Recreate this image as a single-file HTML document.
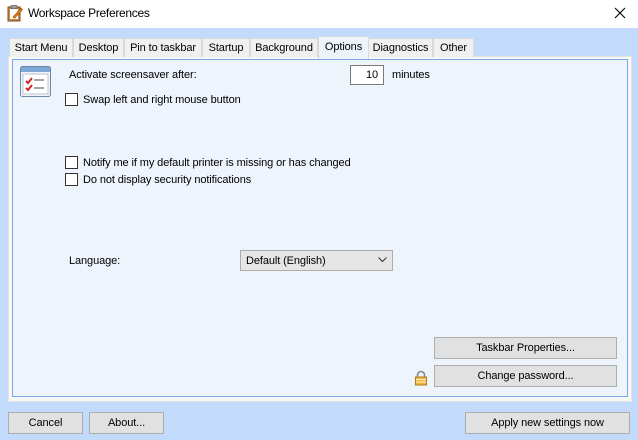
<!DOCTYPE html>
<html><head><style>
*{box-sizing:border-box;margin:0;padding:0}
body{width:638px;height:440px;background:#c2dbfc;font-family:"Liberation Sans",sans-serif;font-size:11px;letter-spacing:-0.1px;color:#000;position:relative;overflow:hidden}
.a{position:absolute}
.title{left:0;top:0;width:638px;height:28px;background:#fff}
.tab{position:absolute;top:38px;height:19px;background:#f0f0f0;border:1px solid #d9d9d9;border-bottom:none;text-align:center;line-height:18px;font-size:11px}
.btn{position:absolute;background:#e1e1e1;border:1px solid #adadad;text-align:center;font-size:11px}
.cb{position:absolute;width:13px;height:13px;border:1px solid #333;background:#fff}
</style></head><body>
<div class="a title"></div>
<svg class="a" style="left:6px;top:4px" width="18" height="18" viewBox="0 0 18 18">
<rect x="2" y="3" width="12" height="14" fill="#c98a4b" stroke="#7a4a1c"/>
<rect x="4" y="5" width="8" height="10" fill="#fff"/>
<rect x="5" y="1.5" width="6" height="3" fill="#999" stroke="#555" stroke-width=".6"/>
<path d="M7 13 L15 4 L16.5 5.5 L8.5 14.5 Z" fill="#e87a1a" stroke="#a34b00" stroke-width=".6"/>
</svg>
<div class="a" style="left:28px;top:6px;font-size:12px;letter-spacing:-0.3px">Workspace Preferences</div>
<svg class="a" style="left:614px;top:7px" width="12" height="12"><path d="M1 1L11 11M11 1L1 11" stroke="#000" stroke-width="1.1"/></svg>

<div class="a" style="left:8px;top:56px;width:624px;height:346px;background:#f8f8f8;border:1px solid #e2e2e2"></div>
<div class="a" style="left:12px;top:59px;width:616px;height:338px;background:#eef4fc;border:1px solid #7aa7e8"></div>

<div class="tab" style="left:9px;width:64px">Start Menu</div>
<div class="tab" style="left:73px;width:51px">Desktop</div>
<div class="tab" style="left:124px;width:78px">Pin to taskbar</div>
<div class="tab" style="left:202px;width:48px">Startup</div>
<div class="tab" style="left:250px;width:68px">Background</div>
<div class="tab" style="left:318px;top:36px;height:23px;width:51px;background:#eef4fc;border-color:#d9d9d9;z-index:2;line-height:20px">Options</div>
<div class="tab" style="left:368px;width:65px">Diagnostics</div>
<div class="tab" style="left:433px;width:41px">Other</div>

<svg class="a" style="left:20px;top:66px" width="31" height="31" viewBox="0 0 31 31">
<rect x="0.5" y="0.5" width="30" height="30" rx="2" fill="#f4f4f4" stroke="#6a86a8"/>
<rect x="1" y="1" width="29" height="5" fill="#7fa8d8"/>
<rect x="3" y="8" width="25" height="20" fill="#fff" stroke="#b8c4d4"/>
<path d="M6 15l2 2 4-5M6 22l2 2 4-5" stroke="#d0262b" stroke-width="2" fill="none"/>
<path d="M14 14h10M14 22h10" stroke="#888" stroke-width="1.5"/>
</svg>

<div class="a" style="left:69px;top:69px">Activate screensaver after:</div>
<div class="a" style="left:350px;top:65px;width:34px;height:20px;background:#fff;border:1px solid #7a7a7a;text-align:right;padding-right:5px;line-height:18px">10</div>
<div class="a" style="left:392px;top:69px">minutes</div>

<div class="cb" style="left:65px;top:93px"></div><div class="a" style="left:83px;top:94px">Swap left and right mouse button</div>
<div class="cb" style="left:65px;top:156px"></div><div class="a" style="left:83px;top:157px">Notify me if my default printer is missing or has changed</div>
<div class="cb" style="left:65px;top:173px"></div><div class="a" style="left:83px;top:174px">Do not display security notifications</div>

<div class="a" style="left:69px;top:255px">Language:</div>
<div class="a" style="left:240px;top:250px;width:153px;height:21px;background:#e5e5e5;border:1px solid #adadad;padding-left:5px;line-height:20px">Default (English)</div>
<svg class="a" style="left:378px;top:257px" width="9" height="6"><path d="M.5 .5L4.5 4.5L8.5 .5" stroke="#333" fill="none"/></svg>

<div class="btn" style="left:434px;top:337px;width:183px;height:22px;line-height:20px">Taskbar Properties...</div>
<div class="btn" style="left:434px;top:365px;width:183px;height:22px;line-height:20px">Change password...</div>
<svg class="a" style="left:414px;top:370px" width="14" height="16" viewBox="0 0 14 16">
<path d="M3.5 7V5a3.5 3.5 0 0 1 7 0v2" stroke="#888" stroke-width="1.6" fill="none"/>
<rect x="1.5" y="7" width="11" height="8" fill="#f0b540" stroke="#b07a1a"/>
<path d="M2 9.5h10M2 12h10" stroke="#fff3c0"/>
</svg>

<div class="btn" style="left:8px;top:412px;width:75px;height:22px;line-height:20px">Cancel</div>
<div class="btn" style="left:89px;top:412px;width:75px;height:22px;line-height:20px">About...</div>
<div class="btn" style="left:465px;top:412px;width:165px;height:22px;line-height:20px">Apply new settings now</div>
</body></html>
